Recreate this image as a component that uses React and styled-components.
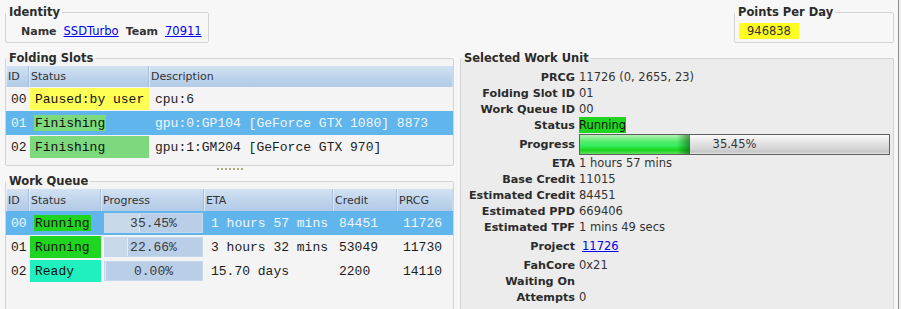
import React from "react";
import styled, { createGlobalStyle } from "styled-components";

const GlobalStyle = createGlobalStyle`
  html, body {
    margin: 0;
    padding: 0;
    background: #efefef;
  }
  body {
    font-family: "DejaVu Sans", Verdana, sans-serif;
    font-size: 11px;
    color: #333;
  }
`;

const Window = styled.div`
  box-sizing: border-box;
  width: 899px;
  height: 309px;
  overflow: hidden;
  padding: 5px 4px 0 5px;
  background: #f7f7f7;
  border-right: 1px solid #8c8c8c;
`;

const TopRow = styled.div`
  display: flex;
  justify-content: space-between;
  align-items: flex-start;
`;

const Group = styled.fieldset`
  box-sizing: border-box;
  margin: 0;
  padding: 0;
  min-width: 0;
  width: ${(p) => p.$width || "auto"};
  min-height: ${(p) => p.$minHeight || "0"};
  border: 1px solid #d3d3d3;
  border-radius: 2px;
  background: ${(p) => p.$bg || "transparent"};
`;

const Legend = styled.legend`
  padding: 0 2px 0 3px;
  font-weight: bold;
  font-size: 11.5px;
  line-height: 15px;
  color: #2b2b2b;
`;

const InfoLine = styled.div`
  display: flex;
  align-items: center;
  gap: 7px;
  height: 22px;
  padding: 0 4px 0 ${(p) => p.$indent || 0}px;
`;

const FieldName = styled.span`
  font-weight: bold;
  font-size: 11px;
  color: #333;
`;

const Link = styled.a`
  font-size: 11.5px;
  color: #0000ee;
  text-decoration: underline;
  cursor: pointer;
`;

const Highlight = styled.span`
  display: flex;
  align-items: center;
  height: 16px;
  padding: 0 ${(p) => p.$padX ?? 0}px;
  background: ${(p) => p.$color};
  font-size: 11.5px;
  color: ${(p) => p.$text || "#333"};
`;

const Columns = styled.div`
  display: grid;
  grid-template-columns: 449px 434px;
  column-gap: 6px;
  margin-top: 8px;
  align-items: start;
`;

const LeftColumn = styled.div`
  display: flex;
  flex-direction: column;
`;

const TableBody = styled.div`
  padding-bottom: ${(p) => p.$bottom || 0}px;
`;

const HeadRow = styled.div`
  display: grid;
  grid-template-columns: ${(p) => p.$cols};
  height: ${(p) => p.$h}px;
  background: linear-gradient(#d3e2f3, #bcd2ea 60%, #b4cbe6);
`;

const HeadCell = styled.div`
  display: flex;
  align-items: center;
  padding-left: 2px;
  overflow: hidden;
  white-space: nowrap;
  font-size: 11px;
  color: #333;
  border-right: 1px solid #a7bfdb;
  box-shadow: inset 1px 0 0 rgba(255, 255, 255, 0.55);
  &:last-child {
    border-right: 1px solid #c9daee;
  }
`;

const Row = styled.div`
  display: grid;
  grid-template-columns: ${(p) => p.$cols};
  height: 24px;
  background: ${(p) => (p.$selected ? "#60b5ec" : "transparent")};
  color: ${(p) => (p.$selected ? "#eef5fc" : "#1c1c1c")};
  font-family: "Liberation Mono", "Courier New", monospace;
  font-size: 13px;
`;

const Cell = styled.div`
  display: flex;
  align-items: center;
  padding-left: ${(p) => p.$pad ?? 6}px;
  overflow: hidden;
  white-space: nowrap;
`;

const StatusCell = styled.div`
  display: flex;
  align-items: ${(p) => (p.$selected ? "center" : "stretch")};
  padding: ${(p) => (p.$selected ? "0 0 0 5px" : "1px 0 1px 1px")};
  overflow: hidden;
  white-space: nowrap;
`;

const StatusTag = styled.span`
  display: flex;
  align-items: center;
  box-sizing: border-box;
  background: ${(p) => p.$color};
  color: #111;
  ${(p) =>
    p.$selected
      ? "height: 16px; padding: 0 1px;"
      : "flex: 1; padding-left: 5px;"}
`;

const BarCell = styled.div`
  display: flex;
  align-items: center;
  padding: 0 1px 0 3px;
`;

const QueueBar = styled.div`
  flex: 1;
  box-sizing: border-box;
  height: 20px;
  display: flex;
  align-items: center;
  justify-content: center;
  border: 1px solid #c7d8eb;
  color: #3a3a3a;
  background: ${(p) =>
    `linear-gradient(to right, #c9d9ea ${p.$pct}%, #e3ecf6 ${p.$pct}%, #e3ecf6 calc(${p.$pct}% + 1px), #b9cfe7 calc(${p.$pct}% + 1px))`};
`;

const Splitter = styled.div`
  box-sizing: border-box;
  height: 8px;
  padding-top: 2px;
  display: flex;
  justify-content: center;
  gap: 2px;
`;

const Grip = styled.span`
  width: 2px;
  height: 2px;
  background: #a9a97b;
`;

const Details = styled.div`
  padding: 3px 3px 40px 0;
`;

const DetailRow = styled.div`
  display: grid;
  grid-template-columns: 114px 1fr;
  column-gap: 4px;
  height: ${(p) => p.$h || 16}px;
  align-items: center;
`;

const DetailLabel = styled.div`
  text-align: right;
  font-weight: bold;
  font-size: 11.2px;
  color: #2b2b2b;
  white-space: nowrap;
`;

const DetailValue = styled.div`
  display: flex;
  align-items: center;
  padding-left: ${(p) => p.$pad || 0}px;
  font-size: 11.5px;
  color: #333;
  white-space: nowrap;
`;

const WuBar = styled.div`
  flex: 1;
  box-sizing: border-box;
  height: 21px;
  display: flex;
  align-items: center;
  justify-content: center;
  border: 1px solid #5f5f5f;
  font-size: 11.5px;
  color: #333;
  background: linear-gradient(#fbfbfb, #e6e6e6 35%, #d6d6d6 70%, #c4c6c9 90%, #e8e8e8);
  overflow: hidden;
  position: relative;
`;

const WuFill = styled.div`
  position: absolute;
  left: 0;
  top: 0;
  bottom: 0;
  background: linear-gradient(to right, rgba(0, 0, 0, 0) 88%, rgba(0, 70, 0, 0.55)),
    linear-gradient(#b6f3b6, #52ea6a 35%, #37ee63 55%, #1ad41a 80%, #62de62);
`;

const WuText = styled.span`
  position: relative;
`;

const slotCols = "23px 120px 1fr";
const queueCols = "23px 72px 103px 129px 64px 1fr";

const STATUS = {
  paused: "#ffff55",
  finishing: "#7dd97d",
  running: "#20d520",
  ready: "#1ef0bf",
};

const slots = [
  { id: "00", status: "Paused:by user", kind: "paused", desc: "cpu:6" },
  { id: "01", status: "Finishing", kind: "finishing", desc: "gpu:0:GP104 [GeForce GTX 1080] 8873", selected: true },
  { id: "02", status: "Finishing", kind: "finishing", desc: "gpu:1:GM204 [GeForce GTX 970]" },
];

const queue = [
  { id: "00", status: "Running", kind: "running", pct: 35.45, eta: "1 hours 57 mins", credit: "84451", prcg: "11726", selected: true },
  { id: "01", status: "Running", kind: "running", pct: 22.66, eta: "3 hours 32 mins", credit: "53049", prcg: "11730" },
  { id: "02", status: "Ready", kind: "ready", pct: 0, eta: "15.70 days", credit: "2200", prcg: "14110" },
];

const details = [
  ["PRCG", "11726 (0, 2655, 23)"],
  ["Folding Slot ID", "01"],
  ["Work Queue ID", "00"],
  ["Status", "status"],
  ["Progress", "progress"],
  ["ETA", "1 hours 57 mins"],
  ["Base Credit", "11015"],
  ["Estimated Credit", "84451"],
  ["Estimated PPD", "669406"],
  ["Estimated TPF", "1 mins 49 secs"],
  ["Project", "project"],
  ["FahCore", "0x21"],
  ["Waiting On", ""],
  ["Attempts", "0"],
];

function DetailContent({ value }) {
  if (value === "status") {
    return (
      <DetailValue>
        <Highlight $color="#20d520" $text="#111">Running</Highlight>
      </DetailValue>
    );
  }
  if (value === "progress") {
    return (
      <DetailValue>
        <WuBar>
          <WuFill style={{ width: "35.45%" }} />
          <WuText>35.45%</WuText>
        </WuBar>
      </DetailValue>
    );
  }
  if (value === "project") {
    return (
      <DetailValue $pad={3}>
        <Link>11726</Link>
      </DetailValue>
    );
  }
  return <DetailValue>{value}</DetailValue>;
}

function rowHeight(value) {
  if (value === "progress") return 22;
  if (value === "project") return 22;
  return 16;
}

export default function App() {
  return (
    <>
      <GlobalStyle />
      <Window>
        <TopRow>
          <Group $width="204px">
            <Legend>Identity</Legend>
            <InfoLine $indent={15}>
              <FieldName>Name</FieldName>
              <Link>SSDTurbo</Link>
              <FieldName>Team</FieldName>
              <Link>70911</Link>
            </InfoLine>
          </Group>
          <Group $width="160px">
            <Legend>Points Per Day</Legend>
            <InfoLine $indent={4}>
              <Highlight $color="#ffff1f" $padX={8}>946838</Highlight>
            </InfoLine>
          </Group>
        </TopRow>

        <Columns>
          <LeftColumn>
            <Group $bg="#f4f4f4">
              <Legend>Folding Slots</Legend>
              <TableBody $bottom={6}>
                <HeadRow $cols={slotCols} $h={21}>
                  <HeadCell>ID</HeadCell>
                  <HeadCell>Status</HeadCell>
                  <HeadCell>Description</HeadCell>
                </HeadRow>
                {slots.map((s) => (
                  <Row key={s.id} $cols={slotCols} $selected={s.selected}>
                    <Cell $pad={5}>{s.id}</Cell>
                    <StatusCell $selected={s.selected}>
                      <StatusTag $color={STATUS[s.kind]} $selected={s.selected}>
                        {s.status}
                      </StatusTag>
                    </StatusCell>
                    <Cell>{s.desc}</Cell>
                  </Row>
                ))}
              </TableBody>
            </Group>

            <Splitter>
              {Array.from({ length: 7 }).map((_, i) => (
                <Grip key={i} />
              ))}
            </Splitter>

            <Group $bg="#f4f4f4" $minHeight="160px">
              <Legend>Work Queue</Legend>
              <TableBody>
                <HeadRow $cols={queueCols} $h={22}>
                  <HeadCell>ID</HeadCell>
                  <HeadCell>Status</HeadCell>
                  <HeadCell>Progress</HeadCell>
                  <HeadCell>ETA</HeadCell>
                  <HeadCell>Credit</HeadCell>
                  <HeadCell>PRCG</HeadCell>
                </HeadRow>
                {queue.map((q) => (
                  <Row key={q.id} $cols={queueCols} $selected={q.selected}>
                    <Cell $pad={5}>{q.id}</Cell>
                    <StatusCell $selected={q.selected}>
                      <StatusTag $color={STATUS[q.kind]} $selected={q.selected}>
                        {q.status}
                      </StatusTag>
                    </StatusCell>
                    <BarCell>
                      <QueueBar $pct={q.pct}>{q.pct.toFixed(2)}%</QueueBar>
                    </BarCell>
                    <Cell $pad={7}>{q.eta}</Cell>
                    <Cell>{q.credit}</Cell>
                    <Cell>{q.prcg}</Cell>
                  </Row>
                ))}
              </TableBody>
            </Group>
          </LeftColumn>

          <Group $bg="#ececec">
            <Legend>Selected Work Unit</Legend>
            <Details>
              {details.map(([label, value]) => (
                <DetailRow key={label} $h={rowHeight(value)}>
                  <DetailLabel>{label}</DetailLabel>
                  <DetailContent value={value} />
                </DetailRow>
              ))}
            </Details>
          </Group>
        </Columns>
      </Window>
    </>
  );
}
